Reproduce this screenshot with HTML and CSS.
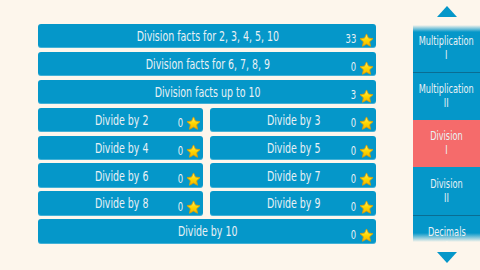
FILE: index.html
```html
<!DOCTYPE html>
<html>
<head>
<meta charset="utf-8">
<link rel="stylesheet" href="styles.css">
</head>
<body>
<svg width="0" height="0" class="defs">
  <defs>
    <linearGradient id="sg" x1="0" y1="0" x2="0" y2="1">
      <stop offset="0" stop-color="#fff27a"/>
      <stop offset="0.5" stop-color="#ffd800"/>
      <stop offset="1" stop-color="#f4b400"/>
    </linearGradient>
    <symbol id="star" viewBox="0 0 24 24">
      <path d="M12 1.5l3.1 6.6 7.2.9-5.3 5 1.4 7.2L12 17.7 5.6 21.2 7 14 1.7 9l7.2-.9z" fill="url(#sg)" stroke="#e0a100" stroke-width="1.4" stroke-linejoin="round"/>
    </symbol>
  </defs>
</svg>
<div class="page">
  <main class="grid">
    <div class="btn wide"><span class="title">Division facts for 2, 3, 4, 5, 10</span><span class="score"><span class="num">33</span><svg class="star"><use href="#star"/></svg></span></div>
    <div class="btn wide"><span class="title">Division facts for 6, 7, 8, 9</span><span class="score"><span class="num">0</span><svg class="star"><use href="#star"/></svg></span></div>
    <div class="btn wide"><span class="title">Division facts up to 10</span><span class="score"><span class="num">3</span><svg class="star"><use href="#star"/></svg></span></div>
    <div class="btn"><span class="title">Divide by 2</span><span class="score"><span class="num">0</span><svg class="star"><use href="#star"/></svg></span></div>
    <div class="btn"><span class="title">Divide by 3</span><span class="score"><span class="num">0</span><svg class="star"><use href="#star"/></svg></span></div>
    <div class="btn"><span class="title">Divide by 4</span><span class="score"><span class="num">0</span><svg class="star"><use href="#star"/></svg></span></div>
    <div class="btn"><span class="title">Divide by 5</span><span class="score"><span class="num">0</span><svg class="star"><use href="#star"/></svg></span></div>
    <div class="btn"><span class="title">Divide by 6</span><span class="score"><span class="num">0</span><svg class="star"><use href="#star"/></svg></span></div>
    <div class="btn"><span class="title">Divide by 7</span><span class="score"><span class="num">0</span><svg class="star"><use href="#star"/></svg></span></div>
    <div class="btn"><span class="title">Divide by 8</span><span class="score"><span class="num">0</span><svg class="star"><use href="#star"/></svg></span></div>
    <div class="btn"><span class="title">Divide by 9</span><span class="score"><span class="num">0</span><svg class="star"><use href="#star"/></svg></span></div>
    <div class="btn wide"><span class="title">Divide by 10</span><span class="score"><span class="num">0</span><svg class="star"><use href="#star"/></svg></span></div>
  </main>
  <nav class="side">
    <div class="arrow-box"><span class="arrow up"></span></div>
    <div class="list">
      <div class="item"><span class="label">Multiplication<br>I</span></div>
      <div class="item sep"><span class="label">Multiplication<br>II</span></div>
      <div class="item active"><span class="label">Division<br>I</span></div>
      <div class="item"><span class="label">Division<br>II</span></div>
      <div class="item sep"><span class="label">Decimals<br>I</span></div>
    </div>
    <div class="arrow-box bottom"><span class="arrow down"></span></div>
  </nav>
</div>
</body>
</html>
```

FILE: styles.css
```css
html, body {
  margin: 0;
  padding: 0;
  background: #fdf6ec;
  width: 480px;
  height: 270px;
  overflow: hidden;
}
body {
  font-family: "Liberation Sans Narrow", "DejaVu Sans Condensed", "Liberation Sans", sans-serif;
  color: #e9f1f5;
}
.defs {
  position: absolute;
  width: 0;
  height: 0;
}
.page {
  display: flex;
  height: 270px;
}
.grid {
  margin: 24px 0 0 37.5px;
  width: 338.5px;
  display: grid;
  grid-template-columns: 1fr 1fr;
  grid-auto-rows: 24.3px;
  column-gap: 7px;
  row-gap: 3.6px;
  align-content: start;
}
.btn {
  background: #0597c9;
  border-radius: 3px;
  position: relative;
  display: flex;
  align-items: center;
  justify-content: center;
  box-shadow: inset 0 -1px 0 rgba(255,255,255,0.25);
}
.wide {
  grid-column: 1 / 3;
}
.title {
  display: inline-block;
  font-size: 14px;
  line-height: 1;
  white-space: nowrap;
  transform: scaleX(0.75);
  margin-left: 2px;
}
.score {
  position: absolute;
  right: 2px;
  bottom: 1.5px;
  display: flex;
  align-items: flex-end;
  line-height: 1;
}
.num {
  display: inline-block;
  font-size: 12.5px;
  transform: scaleX(0.75);
  transform-origin: right center;
  margin-right: 3px;
  margin-bottom: 1px;
}
.score .star {
  width: 15px;
  height: 15px;
  margin-bottom: -1px;
}
.side {
  margin-left: 37px;
  width: 67px;
  display: flex;
  flex-direction: column;
}
.arrow-box {
  height: 24.5px;
  display: flex;
  justify-content: center;
  padding-top: 6px;
  box-sizing: border-box;
}
.arrow-box.bottom {
  height: 28px;
  padding-top: 10px;
}
.arrow {
  width: 0;
  height: 0;
  border-left: 10.5px solid transparent;
  border-right: 10.5px solid transparent;
}
.arrow.up {
  border-bottom: 11px solid #0597c9;
}
.arrow.down {
  border-top: 11px solid #0597c9;
}
.list {
  height: 217.5px;
  overflow: hidden;
  position: relative;
}
.list::before, .list::after {
  content: "";
  position: absolute;
  left: 0;
  right: 0;
  height: 7px;
  z-index: 1;
}
.list::before {
  top: 0;
  background: linear-gradient(#fdf6ec, rgba(253,246,236,0));
}
.list::after {
  bottom: 0;
  height: 9px;
  background: linear-gradient(rgba(253,246,236,0), #fdf6ec);
}
.item {
  height: 47.6px;
  box-sizing: border-box;
  background: #0597c9;
  display: flex;
  align-items: center;
  justify-content: center;
  text-align: center;
}
.label {
  display: inline-block;
  font-size: 12px;
  line-height: 14px;
  white-space: nowrap;
  transform: scaleX(0.76);
}
.item.sep {
  border-top: 1px solid #0a6d93;
}
.item.active {
  background: #f56b6b;
}
```
